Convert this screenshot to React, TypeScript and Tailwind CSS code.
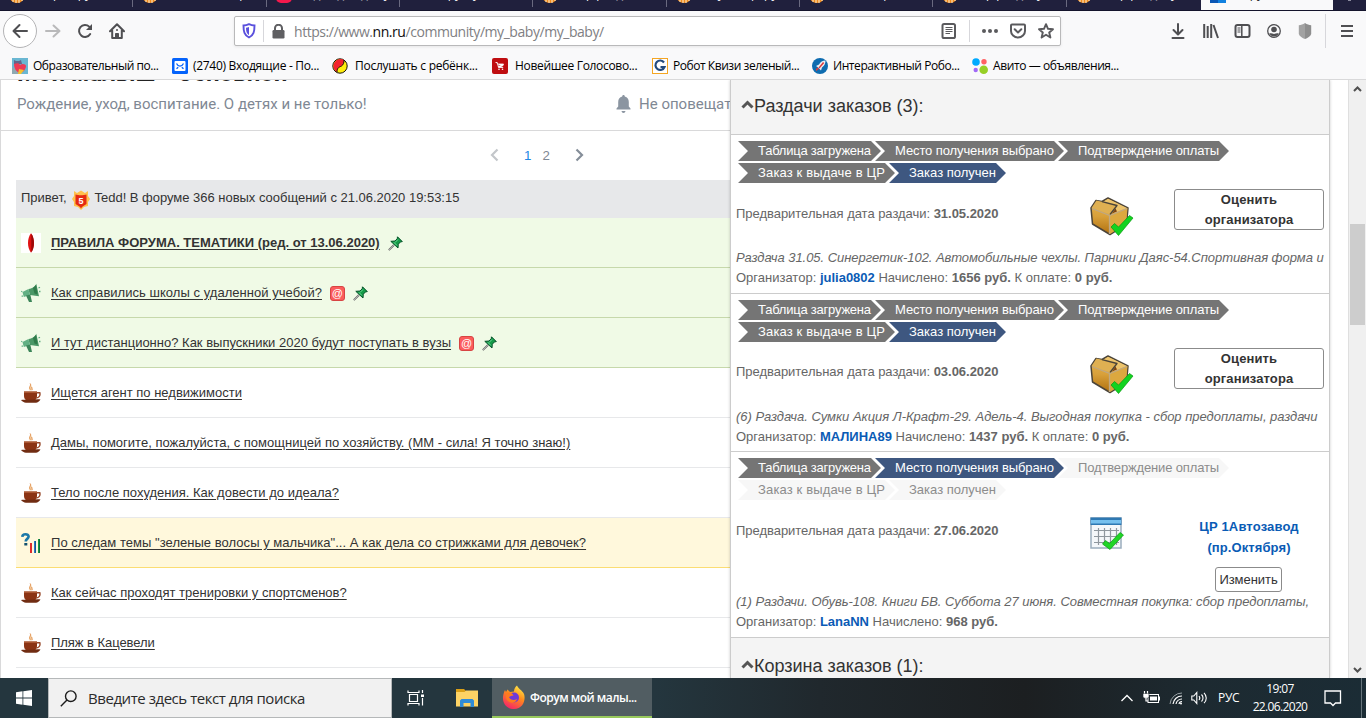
import React from "react";

const tabs = [
  { icon: "orange", text: "Сборы группы" },
  { icon: "orange", text: "Совместные р" },
  { icon: "red", text: "Видео для дому" },
  { icon: "none", text: "Форум у нас" },
  { icon: "orange", text: "Сбор раздача" },
  { icon: "orange", text: "Закупки фору" },
  { icon: "orange", text: "Новости рынк" },
  { icon: "orange", text: "Сбор раздачу" },
  { icon: "orange", text: "Сбор раздачу" },
];

function TabStrip() {
  return (
    <div className="flex h-[11px] overflow-hidden border-b border-[#14142c] bg-[#20203d]">
      {tabs.map((t, i) => (
        <div
          key={i}
          className={`relative h-[11px] shrink-0 overflow-hidden ${i === 8 ? "w-[135px]" : i % 3 === 1 ? "w-[134px]" : "w-[133px]"} ${i === 0 ? "-ml-px" : ""}`}
        >
          {i > 0 && <span className="absolute left-0 top-0 h-[7px] w-px bg-[#6a6a80]" />}
          {t.icon === "orange" && (
            <svg className="absolute left-[10px] top-[-13px]" width="16" height="16" viewBox="0 0 16 16">
              <circle cx="8" cy="8" r="8" fill="#f08a1d" />
              <path d="M4 15V8M7 16V8M10 16V8M13 14V8" stroke="#fff0d0" strokeWidth="1" />
            </svg>
          )}
          {t.icon === "red" && <span className="absolute left-[10px] top-[-13px] h-4 w-4 rounded-[5px] bg-[#f5184c]" />}
          <span className="absolute left-[32px] top-[-14px] w-[94px] overflow-hidden whitespace-nowrap font-['Open_Sans',sans-serif] text-[12px] leading-[16px] text-[#f9f9fa]">
            {t.text}
          </span>
        </div>
      ))}
      <div className="relative h-[11px] w-[132px] overflow-hidden bg-[#f9f9fa]">
        <span className="absolute left-[9px] top-0 h-[3px] w-2 bg-[#0a56b4]" />
        <span className="absolute left-[17px] top-0 h-[3px] w-2 bg-[#1181e0]" />
        <span className="absolute left-[32px] top-[-14px] font-['Open_Sans',sans-serif] text-[12px] leading-[16px] text-[#222]">Форум мой</span>
      </div>
      <div className="h-[1px] w-[3px] self-start ml-[15px] bg-[#8d8da0]" />
    </div>
  );
}

function NavBar() {
  const g = "#4f4f52";
  return (
    <div className="flex h-[42px] items-center bg-[#f9f9fa] pb-[2px]">
      <div className="ml-[3px] flex h-[34px] w-[34px] items-center justify-center rounded-full border border-[#b4b4b6] bg-white">
        <svg width="16" height="16" viewBox="0 0 16 16" fill="none" stroke={g} strokeWidth="2" strokeLinecap="round" strokeLinejoin="round">
          <path d="M15 8H2M7.500 2L1.500 8l6 6" />
        </svg>
      </div>
      <svg className="ml-[8px]" width="16" height="16" viewBox="0 0 16 16" fill="none" stroke="#b9b9ba" strokeWidth="2" strokeLinecap="round" strokeLinejoin="round">
        <path d="M1 8h13M8.500 2.500L14.500 8l-6 5.500" />
      </svg>
      <svg className="ml-[16px]" width="16" height="16" viewBox="0 0 16 16" fill="none" stroke={g} strokeWidth="2" strokeLinecap="round">
        <path d="M13.200 11A6 6 0 1 1 12.200 3.600" />
        <path d="M15 1v6H9z" fill={g} stroke="none" />
      </svg>
      <svg className="ml-[16px]" width="16" height="16" viewBox="0 0 16 16" fill="none" stroke={g} strokeWidth="2" strokeLinecap="round" strokeLinejoin="round">
        <path d="M1 8.200L8 1.200l7 7M3.200 7.500V15h9.600V7.500" />
        <path d="M6.500 15v-4.500h3V15z" fill={g} strokeWidth="1" />
        <circle cx="8" cy="7" r="1" fill={g} stroke="none" />
      </svg>
      <div className="ml-[109px] flex h-[30px] w-[827px] items-center rounded-[2px] border border-[#b9b9ba] bg-white shadow-[0_1px_3px_rgba(0,0,0,0.08)]">
        <svg className="ml-[7px]" width="14" height="16" viewBox="0 0 14 16">
          <path d="M7 1.200C5 2.200 3 2.500 1.500 2.500c0 6 .8 9.800 5.500 12 4.700-2.200 5.500-6 5.500-12-1.500 0-3.500-.3-5.500-1.300z" fill="none" stroke="#5a50dd" strokeWidth="1.900" />
          <path d="M7 4c-1 .6-2 .8-3 .8 0 3.800.6 5.800 3 7.400z" fill="#5a50dd" />
        </svg>
        <span className="ml-[7px] h-[22px] w-px bg-[#d7d7db]" />
        <svg className="ml-[8px]" width="13" height="15" viewBox="0 0 13 15">
          <rect x="0.500" y="6" width="12" height="8.500" rx="1.200" fill="#5f5f62" />
          <path d="M3 7V4a3.500 3.300 0 0 1 7 0v3" fill="none" stroke="#5f5f62" strokeWidth="2" />
        </svg>
        <span className="ml-[9px] w-[640px] whitespace-nowrap font-['Open_Sans',sans-serif] text-[14px] tracking-[-0.45px] text-[#808083]">
          https://www.<span className="text-[#0c0c0d]">nn.ru</span>/community/my_baby/my_baby/
        </span>
        <svg className="ml-[7px] shrink-0" width="16" height="16" viewBox="0 0 16 16" fill="none" stroke="#5a5a5d">
          <rect x="1.500" y="1" width="12.500" height="14" rx="1.600" strokeWidth="2" />
          <path d="M4.500 4.500h7M4.500 6.500h7M4.500 8.500h7M4.500 10.500h4.500" strokeWidth="1" />
        </svg>
        <span className="ml-[12px] h-[22px] w-px shrink-0 bg-[#d7d7db]" />
        <svg className="ml-[11px] shrink-0" width="18" height="16" viewBox="0 0 18 16" fill="#5a5a5d">
          <circle cx="3" cy="8" r="2" /><circle cx="9" cy="8" r="2" /><circle cx="15" cy="8" r="2" />
        </svg>
        <svg className="ml-[11px] shrink-0" width="16" height="16" viewBox="0 0 16 16" fill="none" stroke="#5a5a5d" strokeWidth="2" strokeLinecap="round" strokeLinejoin="round">
          <path d="M1 2.500c0-.6.400-1 1-1h12c.6 0 1 .4 1 1V8a7 6.500 0 0 1-14 0zM4.700 6.300L8 9.500l3.300-3.200" />
        </svg>
        <svg className="ml-[12px] shrink-0" width="16" height="16" viewBox="0 0 16 16" fill="none" stroke="#5a5a5d" strokeWidth="1.900" strokeLinejoin="round">
          <path d="M8 1.200l2 4.600 5 .4-3.800 3.300 1.200 5L8 11.800l-4.400 2.700 1.200-5L1 6.200l5-.4z" />
        </svg>
      </div>
      <svg className="ml-[109px]" width="16" height="16" viewBox="0 0 16 16" fill="none" stroke={g} strokeWidth="2" strokeLinecap="round" strokeLinejoin="round">
        <path d="M8 1v10M3.500 7L8 11.500 12.500 7M2.500 15h11" />
      </svg>
      <svg className="ml-[17px]" width="16" height="16" viewBox="0 0 16 16" fill="none" stroke={g} strokeWidth="2">
        <path d="M1.200 1v14M4.700 3v12M8.200 1v14M10.500 2l4.500 13" />
      </svg>
      <svg className="ml-[15px]" width="17" height="16" viewBox="0 0 17 16" fill="none" stroke={g}>
        <rect x="1.500" y="2" width="14" height="12" rx="2" strokeWidth="2" />
        <path d="M7.800 2v12" strokeWidth="1.500" />
        <path d="M3.500 5h3M3.500 7h3M3.500 9h3" />
      </svg>
      <svg className="ml-[15px]" width="16" height="16" viewBox="0 0 16 16">
        <circle cx="8" cy="8" r="6.300" fill="none" stroke={g} strokeWidth="1.300" />
        <circle cx="8" cy="6.500" r="2.800" fill={g} />
        <path d="M3.200 10.500c2-.6 3 0 4.800.4 1.800-.4 2.800-1 4.800-.4a5.400 5.400 0 0 1-9.600 0z" fill={g} />
      </svg>
      <svg className="ml-[15px]" width="16" height="18" viewBox="0 0 16 18">
        <path d="M8 1C6 2.500 4 3 1.800 3.300V12C2.500 14.500 5.500 16 8 17z" fill="#a2a2a2" />
        <path d="M8 1c2 1.500 4 2 6.200 2.300V12c-.7 2.500-3.700 4-6.200 5z" fill="#8e8e8e" />
      </svg>
      <span className="ml-[12px] h-[34px] w-px bg-[#d7d7db]" />
      <svg className="ml-[14px]" width="14" height="14" viewBox="0 0 14 14" stroke={g} strokeWidth="2">
        <path d="M1 2h12M1 7h12M1 12h12" />
      </svg>
    </div>
  );
}

const bmText = "whitespace-nowrap font-['Open_Sans',sans-serif] text-[12px] leading-[16px] text-black";

function Bookmarks() {
  return (
    <div className="flex h-[27px] items-center border-b border-[#d9d9da] bg-[#f9f9fa] pl-[12px] pb-px">
      <div className="flex w-[160px] items-center gap-[5px]">
        <svg width="16" height="16" viewBox="0 0 16 16">
          <rect width="16" height="16" fill="#6ab7d2" />
          <path d="M0 10h7v6H0z" fill="#8fa9b2" />
          <path d="M2 2l2 1h3l2-1 1 4H2z" fill="#65648a" />
          <path d="M2 6c3-1 5-1 6 1 2-2 6-1 6 1 0 3-3 7-6 7-4-1-6-5-6-9z" fill="#ee3a55" />
          <path d="M7 11l5 1-3 4H6z" fill="#f3c22d" />
        </svg>
        <span className={`${bmText} tracking-[-0.46px]`}>Образовательный по...</span>
      </div>
      <div className="flex w-[160px] items-center gap-[5px]">
        <svg width="16" height="16" viewBox="0 0 16 16">
          <rect width="16" height="16" rx="1.500" fill="#0563fb" />
          <rect x="2.500" y="3" width="11" height="10" rx="1" fill="#fff" />
          <path d="M4.500 5.500c1 2 2 2.700 3.500 2.700s2.500-.7 3.500-2.700M4.500 10.800l1.700-1.600M11.500 10.800L9.800 9.200" fill="none" stroke="#0563fb" strokeWidth="1.300" />
        </svg>
        <span className={`${bmText} tracking-[-0.3px]`}>(2740) Входящие - По...</span>
      </div>
      <div className="flex w-[160px] items-center gap-[7px]">
        <svg width="16" height="16" viewBox="0 0 16 16">
          <circle cx="8" cy="8" r="7.200" fill="#ffed0b" stroke="#171208" strokeWidth="1" />
          <path d="M12 2A7 7 0 1 0 5 14.300C5 9 8 9 9.500 8c2-1.500 2.500-3 2.500-6z" fill="#f3232e" />
          <path d="M12 2c0 3-.5 4.500-2.500 6C8 9 5 9 5 14.300" fill="none" stroke="#171208" />
        </svg>
        <span className={`${bmText} tracking-[-0.25px]`}>Послушать с ребёнк...</span>
      </div>
      <div className="flex w-[160px] items-center gap-[7px]">
        <svg width="16" height="16" viewBox="0 0 16 16">
          <rect width="16" height="16" rx="2" fill="#bf0d10" />
          <path d="M3.500 4.500h1.700L6.500 9.500h4.700M5.500 6H11.500l-.8 2H6.300" fill="#fff" stroke="#fff" strokeWidth=".8" />
          <circle cx="7" cy="11.300" r=".8" fill="#fff" /><circle cx="10.500" cy="11.300" r=".8" fill="#fff" />
        </svg>
        <span className={`${bmText} tracking-[-0.32px]`}>Новейшее Голосово...</span>
      </div>
      <div className="flex w-[160px] items-center gap-[5px]">
        <svg width="16" height="16" viewBox="0 0 16 16">
          <rect x=".5" y=".5" width="15" height="15" fill="#fff" stroke="#f5a623" />
          <path d="M12 4.500A4.700 4.700 0 1 0 12.500 9H8.500" fill="none" stroke="#234a7d" strokeWidth="2.200" />
        </svg>
        <span className={`${bmText} tracking-[-0.45px]`}>Робот Квизи зеленый...</span>
      </div>
      <div className="flex w-[160px] items-center gap-[5px]">
        <svg width="16" height="16" viewBox="0 0 16 16">
          <circle cx="8" cy="8" r="8" fill="#0e6cb0" />
          <path d="M13.500 2.500c-3 0-5 1.500-6.500 4L4 8l1.500 1 2 2L9 12.500 10 9.500c2.500-2 3.500-4 3.500-7z" fill="#e9eef4" />
          <path d="M11 4L6.500 9.500l1 1L12.300 5zM4 11l1.500-1.500L7 11l-3 2z" fill="#dd3c3c" />
        </svg>
        <span className={`${bmText} tracking-[-0.42px]`}>Интерактивный Робо...</span>
      </div>
      <div className="flex items-center gap-[5px]">
        <svg width="16" height="16" viewBox="0 0 16 16">
          <circle cx="4" cy="4" r="3.800" fill="#00aaff" /><circle cx="12" cy="3.700" r="2.700" fill="#ff6163" />
          <circle cx="3.700" cy="12" r="2.200" fill="#a169f7" /><circle cx="11.700" cy="11.700" r="4.300" fill="#97cf26" />
        </svg>
        <span className={`${bmText} tracking-[-0.4px]`}>Авито — объявления...</span>
      </div>
    </div>
  );
}

const Cup = () => (
  <svg width="20" height="20" viewBox="0 0 20 20">
    <path d="M8.500 7.500C6.500 5.500 10 4.500 9 1c3 2 1.500 3.500 2.500 6.500z" fill="#f6d8b5" />
    <path d="M9.200.5c1.500 2-2 3.500.3 6M10.500 4c.8 1 .3 2 .8 3" fill="none" stroke="#e08b42" />
    <path d="M3 8.500h13V13c0 2.500-1.500 4-3 5H6.500C4 17 3 15 3 13z" fill="#8b3414" />
    <path d="M3 8.500h13v1.300H3z" fill="#b3623c" />
    <path d="M16 9.800h2.800c.8 3-.8 5-3.600 5.200" fill="none" stroke="#984a2c" strokeWidth="1.400" />
    <path d="M0 17c3-.8 5 0 7-.3 4 .3 8-.8 12.500-.3-1 2-3 3.200-4.500 3.400H5C3 19.500 1 18.500 0 17z" fill="#702c12" />
  </svg>
);

const Horn = () => (
  <svg width="20" height="20" viewBox="0 0 20 20">
    <path d="M15.300.8L18 13.300 8.800 12 7.500 6C12 5.300 14 3.500 15.300.8z" fill="#4b9767" />
    <path d="M7.500 6l1.300 6-6 2L1.500 9z" fill="#62b083" />
    <path d="M12 5l3-3 1.500 9.500-3-1z" fill="#2f7a4a" />
    <path d="M5 12.500l4.300-1L11 19H8z" fill="#3b8558" />
    <path d="M1 8l-.5 1M1.500 12.500L1 13.800M17.500 5l1.500-.8M18 8.500h1.500" stroke="#62b083" strokeWidth="1.300" />
  </svg>
);

const Pin = () => (
  <svg width="15" height="15" viewBox="0 0 15 15">
    <path d="M.8 14.200L6 9" stroke="#6b6b6b" strokeWidth="1.800" />
    <path d="M.8 14.200L6 9" stroke="#ddd" strokeWidth=".6" />
    <path d="M9.500.8l4.800 4.800-1.800.3-2.200 2.300-.3 3.800L2.800 5.300l4.300-.3 2.100-2.300z" fill="#159a48" stroke="#06532a" strokeWidth="1" strokeLinejoin="round" />
    <path d="M10 3.500l-3 3M6 6.500l3 3" stroke="#6bdc95" strokeWidth="1" />
  </svg>
);

const At = () => (
  <span className="flex h-[15px] w-[15px] items-center justify-center rounded-[3px] border border-[#d74443] bg-[#fb5c5c] font-['Liberation_Sans',sans-serif] text-[11px] leading-[13px] text-white">@</span>
);

const Poll = () => (
  <svg width="20" height="20" viewBox="0 0 20 20">
    <path d="M1.300 3.800C1.500.5 7.800.5 7.600 3.700 7.500 6 4.700 5.800 4.700 8.500" fill="none" stroke="#1c78a8" strokeWidth="2.600" />
    <rect x="3.300" y="10" width="3" height="2.500" fill="#12506e" />
    <rect x="9" y="10" width="2" height="10" fill="#e02c2c" />
    <rect x="13" y="8" width="2" height="12" fill="#2a74c9" />
    <rect x="17" y="6" width="2" height="14" fill="#179a3c" />
    <path d="M14.500 8v12M18.500 6v14" stroke="#083a55" strokeOpacity=".5" />
  </svg>
);

const Rules = () => (
  <svg width="20" height="20" viewBox="0 0 20 20">
    <rect width="20" height="20" fill="#fff" />
    <path d="M10 .3c4 5 4 14.400 0 19.400-4-5-4-14.400 0-19.400z" fill="#e01212" />
    <path d="M10.300.5c3.500 5 3.500 14 0 19z" fill="#9c0a0a" />
  </svg>
);

const topics = [
  { icon: "rules", kind: "g", text: "ПРАВИЛА ФОРУМА. ТЕМАТИКИ (ред. от 13.06.2020)", bold: true, pin: true, at: false, tr: "" },
  { icon: "horn", kind: "g", text: "Как справились школы с удаленной учебой?", pin: true, at: true, tr: "tracking-[0.035px]" },
  { icon: "horn", kind: "g", text: "И тут дистанционно? Как выпускники 2020 будут поступать в вузы", pin: true, at: true, tr: "" },
  { icon: "cup", kind: "w", text: "Ищется агент по недвижимости", tr: "" },
  { icon: "cup", kind: "w", text: "Дамы, помогите, пожалуйста, с помощницей по хозяйству. (ММ - сила! Я точно знаю!)", tr: "tracking-[0.01px]" },
  { icon: "cup", kind: "w", text: "Тело после похудения. Как довести до идеала?", tr: "" },
  { icon: "poll", kind: "y", text: "По следам темы \"зеленые волосы у мальчика\"... А как дела со стрижками для девочек?", tr: "tracking-[0.036px]" },
  { icon: "cup", kind: "w", text: "Как сейчас проходят тренировки у спортсменов?", tr: "" },
  { icon: "cup", kind: "w", text: "Пляж в Кацевели", tr: "tracking-[-0.05px]" },
];

const kindClass: Record<string, string> = {
  g: "bg-[#f0fae6] border-[#c6d8ab]",
  w: "bg-white border-[#e7e8ea]",
  y: "bg-[#fff8dc] border-[#fbdd73]",
};

function Forum() {
  return (
    <div className="w-[730px] shrink-0 overflow-hidden border-l border-[#d9d9da] bg-white font-['Liberation_Sans',sans-serif]">
      <div className="flex h-[51px] flex-col border-b border-[#d9d9da] pl-[16px]">
        <div className="-mt-[20px] h-[27px] whitespace-nowrap font-['Roboto',sans-serif] text-[24px] font-bold leading-[26px] text-[#222]">Мой малыш - Основной</div>
        <div className="mt-[7px] flex h-[20px] items-center justify-between whitespace-nowrap font-['Roboto',sans-serif] text-[15px] text-[#7f8894]">
          <span>Рождение, уход, воспитание. О детях и не только!</span>
          <span className="flex w-[114px] items-center gap-[8px]">
            <svg className="shrink-0" width="15" height="18" viewBox="0 0 15 18" fill="#8b95a1">
              <path d="M7.500 0c.8 0 1.300.6 1.300 1.500 2.700.7 4 2.800 4 5.500v4.500l1.700 2v1H.5v-1l1.700-2V7c0-2.700 1.300-4.800 4-5.500C6.200.6 6.700 0 7.500 0zM5.500 16h4c-.2 1.200-1 1.900-2 1.900s-1.800-.7-2-1.900z" />
            </svg>
            <span>Не оповещать</span>
          </span>
        </div>
      </div>
      <div className="flex h-[49px] items-center pb-[2px] pl-[489px] font-['Liberation_Sans',sans-serif] text-[13.300px] text-[#7f8894]">
        <svg width="9" height="14" viewBox="0 0 9 14" fill="none" stroke="#c3c6ca" strokeWidth="2.200"><path d="M7.500 1.500L2 7l5.500 5.500" /></svg>
        <span className="ml-[25px] mt-[2px] text-[#1e88e5]">1</span>
        <span className="ml-[11px] mt-[2px]">2</span>
        <svg className="ml-[25px]" width="9" height="14" viewBox="0 0 9 14" fill="none" stroke="#858e99" strokeWidth="2.200"><path d="M1.500 1.500L7 7l-5.500 5.500" /></svg>
      </div>
      <div className="ml-[15px] flex h-[38px] items-center bg-[#e7e8ea] pb-[3px] pl-[5px] text-[13px] text-[#333]">
        <span>Привет,</span>
        <svg className="ml-[5px] mt-[4px] shrink-0" width="18" height="20" viewBox="0 0 18 20">
          <path d="M2 1l3 2 4-2.500L13 3l3-2v5l2 3-2 3v4l-4 1-3 3-3-3-4-1v-4L0 9l2-3z" fill="#ffc14d" />
          <path d="M3.500 4.500c3 1 8 1 11 0V14c-2 1.500-4.500 2-5.500 4.500-1-2.500-3.500-3-5.500-4.500z" fill="#e52a12" />
          <text x="9" y="14" fontSize="9" fontWeight="bold" fill="#fff" textAnchor="middle" fontFamily="Liberation Sans">5</text>
        </svg>
        <span className="ml-[5px] whitespace-nowrap tracking-[-0.02px]">Tedd! В форуме 366 новых сообщений с 21.06.2020 19:53:15</span>
      </div>
      {topics.map((t, i) => (
        <div key={i} className={`ml-[15px] flex h-[50px] items-center border-b pl-[5px] ${kindClass[t.kind]}`}>
          <div className="mt-px h-5 w-5">
            {t.icon === "rules" && <Rules />}
            {t.icon === "horn" && <Horn />}
            {t.icon === "cup" && <Cup />}
            {t.icon === "poll" && <Poll />}
          </div>
          <span className={`ml-[10px] whitespace-nowrap text-[13px] leading-[18px] text-[#333] underline underline-offset-2 ${t.bold ? "font-bold" : ""} ${t.tr}`}>{t.text}</span>
          {t.at && <span className="ml-[8px] mt-[2px]"><At /></span>}
          {t.pin && <span className="ml-[8px] mt-px"><Pin /></span>}
        </div>
      ))}
      <div className="ml-[15px] h-[12px]" />
    </div>
  );
}

const chipShape = "[clip-path:polygon(0_0,calc(100%-10px)_0,100%_50%,calc(100%-10px)_100%,0_100%,10px_50%)]";
const tone: Record<string, string> = {
  d: "bg-[#757575] text-white",
  b: "bg-[#3e5780] text-white",
  l: "bg-[#f7f7f7] text-[#8c8c8c]",
};

function Chips({ tones }: { tones: string }) {
  const c = `flex h-[20px] items-center pl-[20px] whitespace-nowrap ${chipShape}`;
  return (
    <div className="flex flex-col gap-[2px] pl-[2px]">
      <div className="flex">
        <div className={`${c} w-[143px] tracking-[-0.22px] ${tone[tones[0]]}`}>Таблица загружена</div>
        <div className={`${c} -ml-[6px] w-[189px] tracking-[-0.1px] ${tone[tones[1]]}`}>Место получения выбрано</div>
        <div className={`${c} -ml-[6px] w-[171px] tracking-[-0.15px] ${tone[tones[2]]}`}>Подтверждение оплаты</div>
      </div>
      <div className="flex">
        <div className={`${c} w-[157px] tracking-[0.15px] ${tone[tones[3]]}`}>Заказ к выдаче в ЦР</div>
        <div className={`${c} -ml-[6px] w-[117px] ${tone[tones[4]]}`}>Заказ получен</div>
      </div>
    </div>
  );
}

const Box = () => (
  <svg width="44" height="40" viewBox="0 0 44 40">
    <defs>
      <linearGradient id="bx" x1="0" y1="0" x2="0" y2="1">
        <stop offset="0" stopColor="#e6b650" /><stop offset=".5" stopColor="#d8a03a" /><stop offset="1" stopColor="#b0700f" />
      </linearGradient>
    </defs>
    <path d="M1 11L6 3.500l6 1L18 1l20 10-1.500 16L20 37.500 2.500 27z" fill="url(#bx)" stroke="#4b4439" strokeWidth="1.500" strokeLinejoin="round" />
    <path d="M19.500 18.500L37.500 11 36 27l-16 10z" fill="#dca83f" />
    <path d="M18 1.800L37 11l-14 5.500 4-8L13 5z" fill="#edc46c" />
    <path d="M22 16.500l5-2-1.500-3z" fill="#7c4313" />
    <path d="M1.500 11L6.500 3.500 27 8.500 20 17.500z" fill="#dfb052" />
    <path d="M12 4.700L27 8.500 20 17.500" fill="none" stroke="#4b4439" strokeWidth="1.300" strokeLinejoin="round" />
    <path d="M2 11.500l17.500 7V37M20 18.500L37 11.500" fill="none" stroke="#bfa883" strokeWidth="1.300" />
    <path d="M21 30l3.500-3.500 4 3.500L39.500 18.500 43 21 28.500 38.500z" fill="#12d320" stroke="#079a10" strokeWidth=".7" />
  </svg>
);

const Calendar = () => (
  <svg width="34" height="34" viewBox="0 0 34 34">
    <rect x="1" y="1" width="30" height="30" fill="#f4f7fa" stroke="#9badbd" strokeWidth="1.500" />
    <path d="M.5.500h31V8H.5z" fill="#2e78b2" />
    <path d="M1 3h30V6.500H1z" fill="#76c0ee" />
    <path d="M8.500 11v17M14.500 11v17M20.500 11v17M26.500 11v17M4 13.500h25M4 19.500h25M4 25.500h25" stroke="#8f979e" strokeWidth="1.200" />
    <path d="M12.500 27l3-3.500 4 3L30 15.500l3.500 2.500L20 32.500z" fill="#20d526" stroke="#079a10" strokeWidth=".7" />
  </svg>
);

interface Order { tones: string; date: string; note: string; org: string; sum: string; pay?: string; h: string; tr: string; datePad: string; iconPad: string; place?: boolean }

const orders: Order[] = [
  { tones: "ddddb", date: "31.05.2020", note: "Раздача 31.05. Синергетик-102. Автомобильные чехлы. Парники Даяс-54.Спортивная форма и", org: "julia0802", sum: "1656 руб.", pay: "0 руб.", h: "h-[159px]", tr: "tracking-[-0.047px]", datePad: "pt-[21px]", iconPad: "pt-[14px]" },
  { tones: "ddddb", date: "03.06.2020", note: "(6) Раздача. Сумки Акция Л-Крафт-29. Адель-4. Выгодная покупка - сбор предоплаты, раздачи", org: "МАЛИНА89", sum: "1437 руб.", pay: "0 руб.", h: "h-[158px]", tr: "tracking-[-0.025px]", datePad: "pt-[20px]", iconPad: "pt-[13px]" },
  { tones: "dblll", date: "27.06.2020", note: "(1) Раздачи. Обувь-108. Книги БВ. Суббота 27 июня. Совместная покупка: сбор предоплаты,", org: "LanaNN", sum: "968 руб.", h: "h-[186px]", tr: "tracking-[-0.025px]", datePad: "pt-[21px]", iconPad: "pt-[17px]", place: true },
];

function OrderBlock({ o }: { o: Order }) {
  return (
    <div className={`flex ${o.h} flex-col border-b border-[#ccc] pl-[5px] pt-[6px]`}>
      <Chips tones={o.tones} />
      <div className={`flex shrink-0 ${o.place ? "h-[92px]" : "h-[65px]"}`}>
        <div className={`w-[354px] tracking-[-0.03px] ${o.datePad}`}>Предварительная дата раздачи: <b>{o.date}</b></div>
        <div className={`w-[84px] ${o.iconPad}`}>{o.place ? <Calendar /> : <Box />}</div>
        {o.place ? (
          <div className="flex w-[150px] flex-col items-center pt-[16px] text-center font-bold leading-[21px] text-[#0a5bb5]">
            <span className="tracking-[0.15px]">ЦР 1Автозавод</span>
            <span className="tracking-[0.1px]">(пр.Октября)</span>
            <button className="mr-px mt-[9px] h-[25px] w-[67px] shrink-0 rounded-[3px] border border-[#8b8b8b] bg-white text-[13px] font-normal leading-[20px] tracking-[-0.05px] text-[#333]">Изменить</button>
          </div>
        ) : (
          <button className="mt-[6px] h-[41px] w-[150px] rounded-[3px] border border-[#8b8b8b] bg-white pb-px text-[13px] font-bold leading-[20px] tracking-[0.12px] text-[#333]">Оценить<br />организатора</button>
        )}
      </div>
      <div className={`whitespace-nowrap italic ${o.tr}`}>{o.note}</div>
      <div className="whitespace-nowrap">
        Организатор: <b className="text-[#0a5bb5]">{o.org}</b> Начислено: <b>{o.sum}</b>{o.pay && <> К оплате: <b>{o.pay}</b></>}
      </div>
    </div>
  );
}

function PanelTitle({ children, cls }: { children: React.ReactNode; cls: string }) {
  return (
    <div className={`flex items-center bg-[#f4f4f4] pl-[10px] text-[18px] text-[#333] ${cls}`}>
      <svg className="mb-[3px]" width="13" height="9" viewBox="0 0 13 9" fill="none" stroke="#555" strokeWidth="3"><path d="M1.500 7.500l5-5 5 5" /></svg>
      <span className="whitespace-nowrap">{children}</span>
    </div>
  );
}

function OrdersPanel() {
  return (
    <div className="w-[600px] shrink-0 overflow-hidden border-l border-r border-[#ccc] bg-white font-['Liberation_Sans',sans-serif] text-[13px] leading-[20px] text-[#666] shadow-[0_0_3px_rgba(0,0,0,0.2)]">
      <PanelTitle cls="h-[55px] border-b border-[#ccc] pb-[2px]">Раздачи заказов (3):</PanelTitle>
      {orders.map((o, i) => <OrderBlock key={i} o={o} />)}
      <PanelTitle cls="h-[55px]">Корзина заказов (1):</PanelTitle>
    </div>
  );
}

function Scrollbar() {
  return (
    <div className="ml-[18px] flex w-[18px] shrink-0 flex-col items-center border-l border-[#dfdfdf] bg-[#f0f0f0]">
      <svg className="mt-[5px]" width="9" height="8" viewBox="0 0 9 8" fill="none" stroke="#505050" strokeWidth="2"><path d="M1 6l3.500-3.500L8 6" /></svg>
      <div className="mt-[131px] h-[101px] w-[15px] bg-[#cdcdcd]" />
      <svg className="mb-[4px] mt-auto" width="9" height="8" viewBox="0 0 9 8" fill="none" stroke="#505050" strokeWidth="2"><path d="M1 2l3.500 3.500L8 2" /></svg>
    </div>
  );
}

function Taskbar() {
  return (
    <div className="flex h-[40px] items-center bg-[linear-gradient(90deg,#24363e_0%,#24363e_48%,#20282d_60%,#1c1f21_75%,#1d2a31_88%,#1b2c35_100%)] font-['Open_Sans',sans-serif] text-white">
      <div className="flex w-[48px] justify-center">
        <svg width="16" height="16" viewBox="0 0 16 16" fill="#fff">
          <path d="M0 2.200L6.500 1.300v6.300H0zM7.300 1.200L16 0v7.600H7.300zM0 8.400h6.500v6.300L0 13.800zM7.300 8.400H16V16l-8.700-1.200z" />
        </svg>
      </div>
      <div className="flex h-[40px] w-[344px] items-center border border-[#b5b8b9] bg-[#f1f1f1] pl-[11px]">
        <svg width="17" height="17" viewBox="0 0 17 17" fill="none" stroke="#1c1c1c" strokeWidth="1.400"><circle cx="10.800" cy="6.200" r="5.300" /><path d="M7 10L.8 16.200" /></svg>
        <span className="ml-[11px] whitespace-nowrap text-[15px] tracking-[-0.45px] text-[#2b2b2b]">Введите здесь текст для поиска</span>
      </div>
      <svg className="ml-[15px] shrink-0" width="18" height="18" viewBox="0 0 18 18" fill="none" stroke="#fff" strokeWidth="1.200">
        <path d="M1 1.500V3.500h11V1.500M2.500 5.500h8v7h-8zM1 16.500V14.500h11v2M15.500 1v3M15.500 9v7.500" />
        <rect x="14" y="5.500" width="3" height="2.500" fill="#fff" stroke="none" />
      </svg>
      <svg className="ml-[31px] shrink-0" width="22" height="18" viewBox="0 0 22 18">
        <path d="M0 0h8l2 2v3H0z" fill="#dba017" />
        <path d="M0 3h8.500L10 1.500h12V17.500H0z" fill="#fdd365" />
        <path d="M4 18v-6.500l1.500-1.500h11l1.500 1.500V18h-3.500v-4h-7v4z" fill="#2f8bd8" />
      </svg>
      <div className="ml-[14px] flex h-[40px] w-[160px] shrink-0 items-center border-b-2 border-[#98c95c] bg-[#515d62] pl-[10px]">
        <svg className="shrink-0" width="24" height="24" viewBox="0 0 24 24">
          <defs>
            <linearGradient id="ff" x1=".8" y1="0" x2=".3" y2="1">
              <stop offset="0" stopColor="#fff04a" /><stop offset=".45" stopColor="#ff8a1c" /><stop offset="1" stopColor="#f5236a" />
            </linearGradient>
          </defs>
          <path d="M15 .5c1 3 5 4.500 7 8.500 2 6-1 15-10 15C5 24 .5 18.500 1 12c.3-3 1-5 2-7l1 2 1.500-2.500L8 7l4-.5C12 4 13 2 15 .5z" fill="url(#ff)" />
          <circle cx="12" cy="12.500" r="5" fill="#6f39d8" />
          <path d="M3.500 8c4-1.500 7 0 8 2.500-2.500 0-3 1-4.500 1.500 1 3 5 4 8 2-1 5-9 5-11-1z" fill="#ff7a1f" />
        </svg>
        <span className="ml-[4px] mt-[2px] whitespace-nowrap text-[12px] font-semibold tracking-[-0.5px]">Форум мой малы...</span>
      </div>
      <svg className="ml-[469px] shrink-0" width="12" height="8" viewBox="0 0 12 8" fill="none" stroke="#fff" strokeWidth="1.300"><path d="M.5 7L6 1.500 11.500 7" /></svg>
      <svg className="ml-[10px] shrink-0" width="17" height="14" viewBox="0 0 17 14">
        <rect x="5" y="3.500" width="10.500" height="8" fill="none" stroke="#fff" />
        <rect x="7" y="5.500" width="7" height="4" fill="#fff" />
        <path d="M16.500 5.500v4" stroke="#fff" />
        <path d="M0 2.500h6v3C6 8 0 8 0 5.500z" fill="#fff" stroke="#1c262b" strokeWidth=".6" />
        <path d="M1.500 0v2.500M4.500 0v2.500M3 7v3h2" fill="none" stroke="#fff" strokeWidth="1.200" />
      </svg>
      <svg className="ml-[9px] shrink-0" width="14" height="14" viewBox="0 0 14 14" fill="none" stroke="#fff">
        <path d="M1 13A12 12 0 0 1 13 2" stroke="#9aa3a7" /><path d="M4 13a9 9 0 0 1 9-8M7 13a6 6 0 0 1 6-5M10 13a3 3 0 0 1 3-2.500" strokeWidth="1.200" />
        <circle cx="12" cy="12.500" r="1" fill="#fff" stroke="none" />
      </svg>
      <svg className="ml-[8px] shrink-0" width="17" height="14" viewBox="0 0 17 14" fill="none" stroke="#fff" strokeWidth="1.100">
        <path d="M.8 5h2l3-3.500v11L2.800 9h-2zM8 5c1 1.200 1 2.800 0 4M10.500 3.500c2 2 2 5 0 7M13 1.800c3 3 3 7.400 0 10.400" />
      </svg>
      <span className="ml-[10px] w-[24px] text-[12px] tracking-[-0.3px]">РУС</span>
      <span className="ml-[10px] flex w-[56px] flex-col items-center whitespace-nowrap text-[12px] leading-[18px] tracking-[-0.65px]"><span>19:07</span><span>22.06.2020</span></span>
      <svg className="ml-[16px] shrink-0" width="18" height="17" viewBox="0 0 18 17" fill="none" stroke="#fff" strokeWidth="1.300"><path d="M1 1h15.500v12h-5L9 15.500 6.500 13H1z" /></svg>
      <span className="ml-auto mr-[4px] h-[40px] w-px bg-[#66747b]" />
    </div>
  );
}

export default function App() {
  return (
    <div className="flex h-[718px] w-[1366px] flex-col overflow-hidden bg-white">
      <TabStrip />
      <NavBar />
      <Bookmarks />
      <div className="flex h-[598px] overflow-hidden">
        <Forum />
        <OrdersPanel />
        <Scrollbar />
      </div>
      <Taskbar />
    </div>
  );
}
